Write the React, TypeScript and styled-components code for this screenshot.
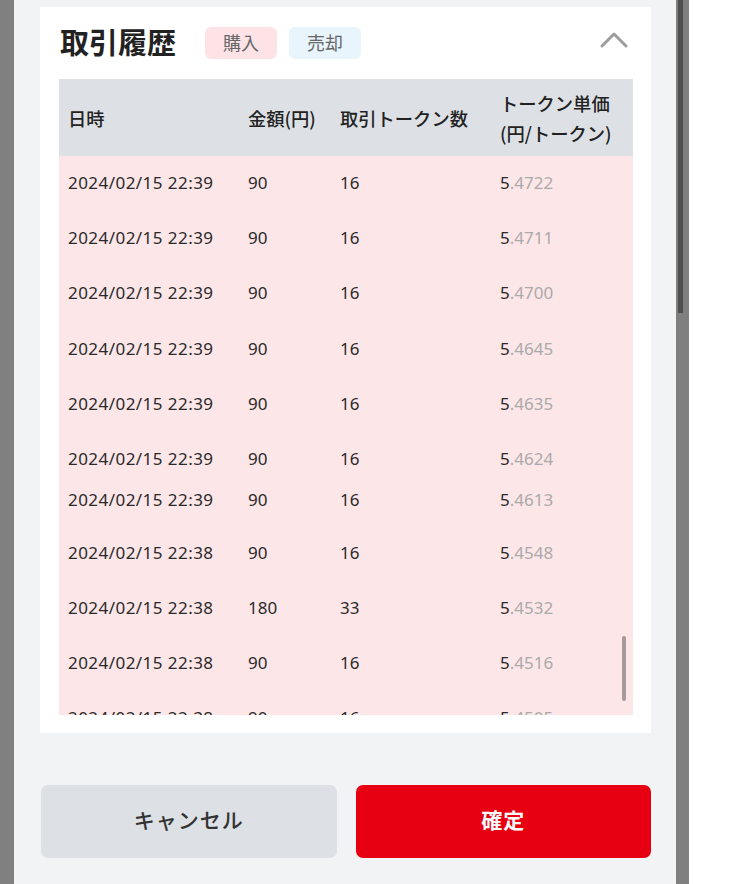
import React from "react";
import styled, { createGlobalStyle } from "styled-components";

const GlobalStyle = createGlobalStyle`
  html, body { margin: 0; padding: 0; background: #ffffff; }
  body { font-family: "Noto Sans CJK JP", "Noto Sans", sans-serif; color: #222; }
  * { box-sizing: border-box; }
`;

const Page = styled.div`
  display: flex;
  width: 750px;
  height: 884px;
  overflow: hidden;
  background: #ffffff;
`;

const LeftRail = styled.div`
  width: 14px;
  flex: none;
  background: #808080;
`;

const RightRail = styled.div`
  width: 13px;
  flex: none;
  background: #7f7f7f;
  position: relative;
`;

const RailThumb = styled.div`
  position: absolute;
  left: 2px;
  top: 0;
  width: 5px;
  height: 313px;
  background: #4f4f4f;
`;

const Main = styled.div`
  width: 662px;
  flex: none;
  background: #f2f3f5;
  padding: 7px 25px 0 26px;
  display: flex;
  flex-direction: column;
`;

const Card = styled.section`
  background: #ffffff;
  padding: 0 18px 18px 19px;
  display: flex;
  flex-direction: column;
`;

const CardHeader = styled.div`
  height: 72px;
  display: flex;
  align-items: center;
  padding-left: 1px;
`;

const Title = styled.h2`
  margin: 0 29px 5px 0;
  font-size: 29px;
  font-weight: 700;
  color: #222;
  letter-spacing: 0;
`;

const Tag = styled.span<{ $tone: "buy" | "sell" }>`
  display: inline-flex;
  align-items: center;
  justify-content: center;
  width: 72px;
  height: 32px;
  border-radius: 6px;
  font-size: 18px;
  line-height: 1;
  padding-bottom: 2px;
  color: #666;
  margin-right: 12px;
  background: ${(p) => (p.$tone === "buy" ? "#fde3e6" : "#e9f5fc")};
`;

const Toggle = styled.button`
  margin-left: auto;
  margin-right: 4px;
  margin-bottom: 8px;
  width: 30px;
  height: 20px;
  border: 0;
  padding: 0;
  background: transparent;
  display: flex;
  align-items: center;
  justify-content: center;
`;

const Table = styled.div`
  display: flex;
  flex-direction: column;
`;

const Cols = `
  display: grid;
  grid-template-columns: 180px 92px 160px 1fr;
  padding-left: 9px;
`;

const HeadRow = styled.div`
  ${Cols}
  height: 77px;
  align-items: center;
  background: #dde1e5;
`;

const HeadCell = styled.div`
  font-size: 18.3px;
  font-weight: 500;
  line-height: 30px;
  color: #222;
  white-space: nowrap;
`;

const Body = styled.div`
  position: relative;
  height: 559px;
  overflow: hidden;
  background: #fde6e8;
`;

const Row = styled.div<{ $h: number; $nudge: number }>`
  ${Cols}
  height: ${(p) => p.$h}px;
  align-items: center;
  padding-top: ${(p) => (p.$nudge > 0 ? p.$nudge : 0)}px;
  padding-bottom: ${(p) => (p.$nudge < 0 ? -p.$nudge : 0)}px;
`;

const Cell = styled.div<{ $spaced?: boolean }>`
  font-family: "Noto Sans", "Noto Sans CJK JP", sans-serif;
  font-size: 17px;
  color: #2a2a2a;
  white-space: nowrap;
  margin-top: -2px;
  letter-spacing: ${(p) => (p.$spaced ? "0.45px" : "0")};
`;

const Frac = styled.span`
  color: #aaaaaa;
`;

const ScrollThumb = styled.div`
  position: absolute;
  right: 7px;
  top: 480px;
  width: 4px;
  height: 65px;
  border-radius: 2px;
  background: #a6999b;
`;

const Actions = styled.div`
  margin-top: 52px;
  display: grid;
  grid-template-columns: 1fr 1fr;
  gap: 19px;
  padding-left: 1px;
`;

const ActionButton = styled.button<{ $primary?: boolean }>`
  height: 73px;
  border: 0;
  border-radius: 7px;
  padding: 0 0 6px;
  font-family: "Noto Sans CJK JP", sans-serif;
  font-size: 21px;
  font-weight: ${(p) => (p.$primary ? 700 : 500)};
  color: ${(p) => (p.$primary ? "#ffffff" : "#333333")};
  background: ${(p) => (p.$primary ? "#e60012" : "#dde1e5")};
  letter-spacing: 1px;
`;

type Trade = { date: string; amount: string; count: string; whole: string; frac: string; h: number; nudge: number };

const trades: Trade[] = [
  { date: "2024/02/15 22:39", amount: "90", count: "16", whole: "5", frac: ".4722", h: 55, nudge: 0 },
  { date: "2024/02/15 22:39", amount: "90", count: "16", whole: "5", frac: ".4711", h: 55, nudge: 0 },
  { date: "2024/02/15 22:39", amount: "90", count: "16", whole: "5", frac: ".4700", h: 55, nudge: 0 },
  { date: "2024/02/15 22:39", amount: "90", count: "16", whole: "5", frac: ".4645", h: 56, nudge: 0 },
  { date: "2024/02/15 22:39", amount: "90", count: "16", whole: "5", frac: ".4635", h: 55, nudge: 0 },
  { date: "2024/02/15 22:39", amount: "90", count: "16", whole: "5", frac: ".4624", h: 48, nudge: 6 },
  { date: "2024/02/15 22:39", amount: "90", count: "16", whole: "5", frac: ".4613", h: 47, nudge: -7 },
  { date: "2024/02/15 22:38", amount: "90", count: "16", whole: "5", frac: ".4548", h: 54, nudge: -2 },
  { date: "2024/02/15 22:38", amount: "180", count: "33", whole: "5", frac: ".4532", h: 55, nudge: 0 },
  { date: "2024/02/15 22:38", amount: "90", count: "16", whole: "5", frac: ".4516", h: 55, nudge: 0 },
  { date: "2024/02/15 22:38", amount: "90", count: "16", whole: "5", frac: ".4505", h: 55, nudge: 0 },
];

const ChevronUp = () => (
  <svg width="28" height="17" viewBox="0 0 28 17" fill="none">
    <path d="M2 15 L14 3 L26 15" stroke="#9d9d9d" strokeWidth="3" strokeLinecap="round" strokeLinejoin="round" />
  </svg>
);

export default function App() {
  return (
    <>
      <GlobalStyle />
      <Page>
        <LeftRail />
        <Main>
          <Card>
            <CardHeader>
              <Title>取引履歴</Title>
              <Tag $tone="buy">購入</Tag>
              <Tag $tone="sell">売却</Tag>
              <Toggle aria-label="閉じる">
                <ChevronUp />
              </Toggle>
            </CardHeader>
            <Table>
              <HeadRow>
                <HeadCell>日時</HeadCell>
                <HeadCell>金額(円)</HeadCell>
                <HeadCell>取引トークン数</HeadCell>
                <HeadCell>
                  トークン単価
                  <br />
                  (円/トークン)
                </HeadCell>
              </HeadRow>
              <Body>
                {trades.map((t, i) => (
                  <Row key={i} $h={t.h} $nudge={t.nudge}>
                    <Cell $spaced>{t.date}</Cell>
                    <Cell>{t.amount}</Cell>
                    <Cell>{t.count}</Cell>
                    <Cell>
                      {t.whole}
                      <Frac>{t.frac}</Frac>
                    </Cell>
                  </Row>
                ))}
                <ScrollThumb />
              </Body>
            </Table>
          </Card>
          <Actions>
            <ActionButton>キャンセル</ActionButton>
            <ActionButton $primary>確定</ActionButton>
          </Actions>
        </Main>
        <RightRail>
          <RailThumb />
        </RightRail>
      </Page>
    </>
  );
}
